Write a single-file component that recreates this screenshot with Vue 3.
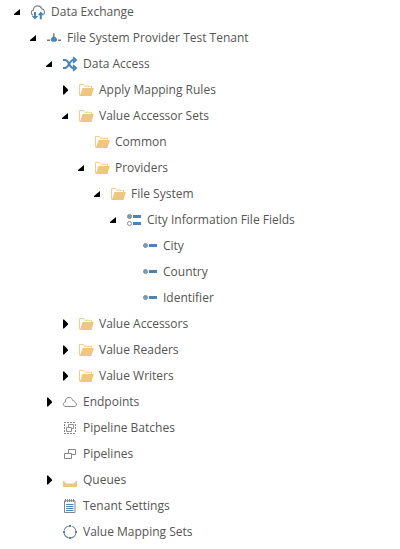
<script setup>
const rows = [
  { level: 0, state: 'open', icon: 'exchange', label: 'Data Exchange' },
  { level: 1, state: 'open', icon: 'tenant', label: 'File System Provider Test Tenant' },
  { level: 2, state: 'open', icon: 'shuffle', label: 'Data Access' },
  { level: 3, state: 'closed', icon: 'folder', label: 'Apply Mapping Rules' },
  { level: 3, state: 'open', icon: 'folder', label: 'Value Accessor Sets' },
  { level: 4, state: 'leaf', icon: 'folder', label: 'Common' },
  { level: 4, state: 'open', icon: 'folder', label: 'Providers' },
  { level: 5, state: 'open', icon: 'folder', label: 'File System' },
  { level: 6, state: 'open', icon: 'fields', label: 'City Information File Fields' },
  { level: 7, state: 'leaf', icon: 'field', label: 'City' },
  { level: 7, state: 'leaf', icon: 'field', label: 'Country' },
  { level: 7, state: 'leaf', icon: 'field', label: 'Identifier' },
  { level: 3, state: 'closed', icon: 'folder', label: 'Value Accessors' },
  { level: 3, state: 'closed', icon: 'folder', label: 'Value Readers' },
  { level: 3, state: 'closed', icon: 'folder', label: 'Value Writers' },
  { level: 2, state: 'closed', icon: 'cloud', label: 'Endpoints' },
  { level: 2, state: 'leaf', icon: 'batches', label: 'Pipeline Batches' },
  { level: 2, state: 'leaf', icon: 'pipelines', label: 'Pipelines' },
  { level: 2, state: 'closed', icon: 'queue', label: 'Queues' },
  { level: 2, state: 'leaf', icon: 'notepad', label: 'Tenant Settings' },
  { level: 2, state: 'leaf', icon: 'ring', label: 'Value Mapping Sets' },
]
</script>

<template>
  <ul class="tree">
    <li v-for="row in rows" :key="row.label" class="row" :style="{ '--level': row.level }">
      <svg class="arrow" viewBox="0 0 7 10">
        <path v-if="row.state === 'open'" d="M6 2v6H0V7z" />
        <path v-else-if="row.state === 'closed'" d="M1 .5h1l4 4v1l-4 4H1z" />
      </svg>
      <svg class="icon" viewBox="0 0 16 16" fill="none">
        <g v-if="row.icon === 'exchange'">
          <path d="M3 11.2C.6 10 .8 6.7 3.3 6.2 3.4 3.2 5.4 1.8 7.6 1.9c2 0 3.6 1 4.2 3 2.6.2 3.7 3.8 1.8 5.6" stroke="#858585" stroke-width="1.2" />
          <path d="M4 8h2v4h2.2L5 15.6 1.8 12H4zM9.8 15.2v-4H7.6l3.2-3.7 3.3 3.7h-2.3v4z" fill="#4a84bc" />
        </g>
        <g v-else-if="row.icon === 'tenant'">
          <path d="M7.8 3.3v4M1 10.2h3M12 10.2h3" stroke="#777" stroke-width="1.4" />
          <path d="M6.6 6.8h2.6l1.8 2.2v1.4l-1.4 1.4H6.2l-1.4-1.4V9z" fill="#4a84bc" />
        </g>
        <g v-else-if="row.icon === 'shuffle'">
          <path d="M1 4h2.2c3.7 0 4.2 8 8 8h1.4M1 12h2.2c3.7 0 4.2-8 8-8h1.4" stroke="#4a84bc" stroke-width="2" />
          <path d="M11 1.3 14 4l-3 2.7M11 9.3l3 2.7-3 2.7" stroke="#4a84bc" stroke-width="1.9" />
        </g>
        <g v-else-if="row.icon === 'folder'">
          <path d="M1.5 13.5v-11h4l1.2 1.8h6.8V6" stroke="#f0cd8e" />
          <path d="M4.6 6h11.2l-2.3 8H1.8z" fill="#edc67f" />
        </g>
        <g v-else-if="row.icon === 'fields'">
          <circle cx="3.5" cy="4.5" r="2" fill="#6f9fcb" stroke="#8a8a8a" />
          <circle cx="3.5" cy="11.5" r="2" stroke="#8a8a8a" />
          <path d="M7 3h8v3H7zM7 10h8v3H7z" fill="#4a84bc" />
        </g>
        <g v-else-if="row.icon === 'field'">
          <circle cx="3.5" cy="7.5" r="2" fill="#6f9fcb" stroke="#8a8a8a" />
          <path d="M7 6h8v3H7z" fill="#4a84bc" />
        </g>
        <path
          v-else-if="row.icon === 'cloud'"
          d="M4 12.5C.4 12.4.5 8.4 3.4 8.1 3.1 4.8 5 3.5 7 3.5c2 0 3.4 1.1 3.8 3.2 1.2-.2 2 .3 2.1 1.6 2.3.6 2.1 4.1-.6 4.2z"
          stroke="#858585"
        />
        <g v-else-if="row.icon === 'batches'" stroke="#858585">
          <path d="M2 2.5h12M2 13.5h12M2.5 4v9M13.5 4v9" stroke-dasharray="2 1" />
          <path d="M6.5 7V4.5h5v4H9.5M4.5 7.5h5v4h-5z" stroke="#909090" />
        </g>
        <path v-else-if="row.icon === 'pipelines'" d="M6.5 7.5v-4h7v5H9.5M2.5 7.5h7v5h-7z" stroke="#858585" />
        <path v-else-if="row.icon === 'queue'" d="M1 9h1l2.2 2.5h7.6L14 9h1v6H1z" fill="#edc67f" />
        <g v-else-if="row.icon === 'notepad'">
          <path d="M2.5 2.8h10.5v11.7H2.5z" stroke="#858585" />
          <path d="M3.5 1v3M5.5 1v3M7.5 1v3M9.5 1v3M11.5 1v3" stroke="#777" stroke-width=".8" />
          <path d="M4 6.5h7.5M4 8.5h7.5M4 10.5h7.5M4 12.5h7.5" stroke="#4a84bc" />
        </g>
        <g v-else>
          <circle cx="8" cy="8" r="6" stroke="#858585" stroke-width="1.1" stroke-dasharray="7.02 2.4" stroke-dashoffset="-1.2" />
          <path d="M7 1h2v2H7zM7 13h2v2H7zM1 7h2v2H1zM13 7h2v2h-2z" fill="#4a84bc" />
        </g>
      </svg>
      <span class="label">{{ row.label }}</span>
    </li>
  </ul>
</template>

<style>
body {
  background: #fff;
}
</style>

<style scoped>
.tree {
  margin: -1px 0 0;
  padding: 0;
  list-style: none;
  font: 12px/26px "Open Sans", sans-serif;
  color: #555;
}
.row {
  display: flex;
  align-items: center;
  height: 26px;
  padding-left: calc(14px + var(--level) * 16px);
}
.arrow {
  flex: none;
  width: 7px;
  height: 10px;
  margin-right: 9px;
  fill: #000;
}
.icon {
  flex: none;
  width: 16px;
  height: 16px;
  margin-right: 5px;
}
.label {
  white-space: nowrap;
}
</style>
